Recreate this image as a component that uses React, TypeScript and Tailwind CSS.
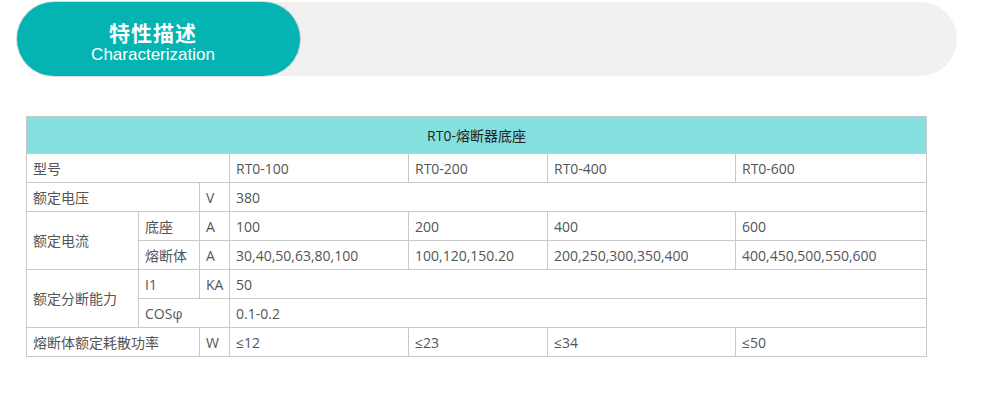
import React from 'react';

const cell = 'border border-[#c9c9c9] h-[29px] px-[6px] py-0 text-left align-middle whitespace-nowrap';

const App: React.FC = () => {
  const cols = [112, 61, 30, 179, 139, 188, 191];

  return (
    <div className="w-[990px] h-[397px] bg-white overflow-hidden" style={{ fontFamily: '"Open Sans", "Noto Sans CJK SC", sans-serif' }}>
      {/* title bar */}
      <div className="ml-[17px] mt-[2px] w-[940px] h-[74px] rounded-full bg-[#f1f1f1] flex">
        <div className="w-[283px] h-full rounded-full bg-[#03b4b3] shadow-[0_0_1px_1px_rgba(150,150,150,0.35)] flex flex-col items-center justify-center pt-[6px] pr-[11px] text-white">
          <div className="text-[21px] font-bold leading-[22px] tracking-[1px]" style={{ fontFamily: '"Noto Sans CJK SC", sans-serif' }}>
            特性描述
          </div>
          <div className="text-[17px] leading-[19px] mt-[2px]" style={{ fontFamily: '"Liberation Sans", Arial, sans-serif' }}>
            Characterization
          </div>
        </div>
      </div>

      {/* spec table */}
      <table className="ml-[26px] mt-[40px] w-[900px] table-fixed border-collapse text-[14px] text-[#555]">
        <colgroup>
          {cols.map((w, i) => (
            <col key={i} style={{ width: w }} />
          ))}
        </colgroup>
        <tbody>
          <tr>
            <td colSpan={7} className="border border-[#c9c9c9] h-[37px] bg-[#84dfdf] text-center text-[#222] align-middle">
              RT0-熔断器底座
            </td>
          </tr>
          <tr>
            <td colSpan={3} className={cell}>型号</td>
            <td className={cell}>RT0-100</td>
            <td className={cell}>RT0-200</td>
            <td className={cell}>RT0-400</td>
            <td className={cell}>RT0-600</td>
          </tr>
          <tr>
            <td colSpan={2} className={cell}>额定电压</td>
            <td className={cell}>V</td>
            <td colSpan={4} className={cell}>380</td>
          </tr>
          <tr>
            <td rowSpan={2} className={cell}>额定电流</td>
            <td className={cell}>底座</td>
            <td className={cell}>A</td>
            <td className={cell}>100</td>
            <td className={cell}>200</td>
            <td className={cell}>400</td>
            <td className={cell}>600</td>
          </tr>
          <tr>
            <td className={cell}>熔断体</td>
            <td className={cell}>A</td>
            <td className={cell}>30,40,50,63,80,100</td>
            <td className={cell}>100,120,150.20</td>
            <td className={cell}>200,250,300,350,400</td>
            <td className={cell}>400,450,500,550,600</td>
          </tr>
          <tr>
            <td rowSpan={2} className={cell}>额定分断能力</td>
            <td className={cell}>I1</td>
            <td className={cell}>KA</td>
            <td colSpan={4} className={cell}>50</td>
          </tr>
          <tr>
            <td colSpan={2} className={cell}>COSφ</td>
            <td colSpan={4} className={cell}>0.1-0.2</td>
          </tr>
          <tr>
            <td colSpan={2} className={cell}>熔断体额定耗散功率</td>
            <td className={cell}>W</td>
            <td className={cell}>≤12</td>
            <td className={cell}>≤23</td>
            <td className={cell}>≤34</td>
            <td className={cell}>≤50</td>
          </tr>
        </tbody>
      </table>
    </div>
  );
};

export default App;
